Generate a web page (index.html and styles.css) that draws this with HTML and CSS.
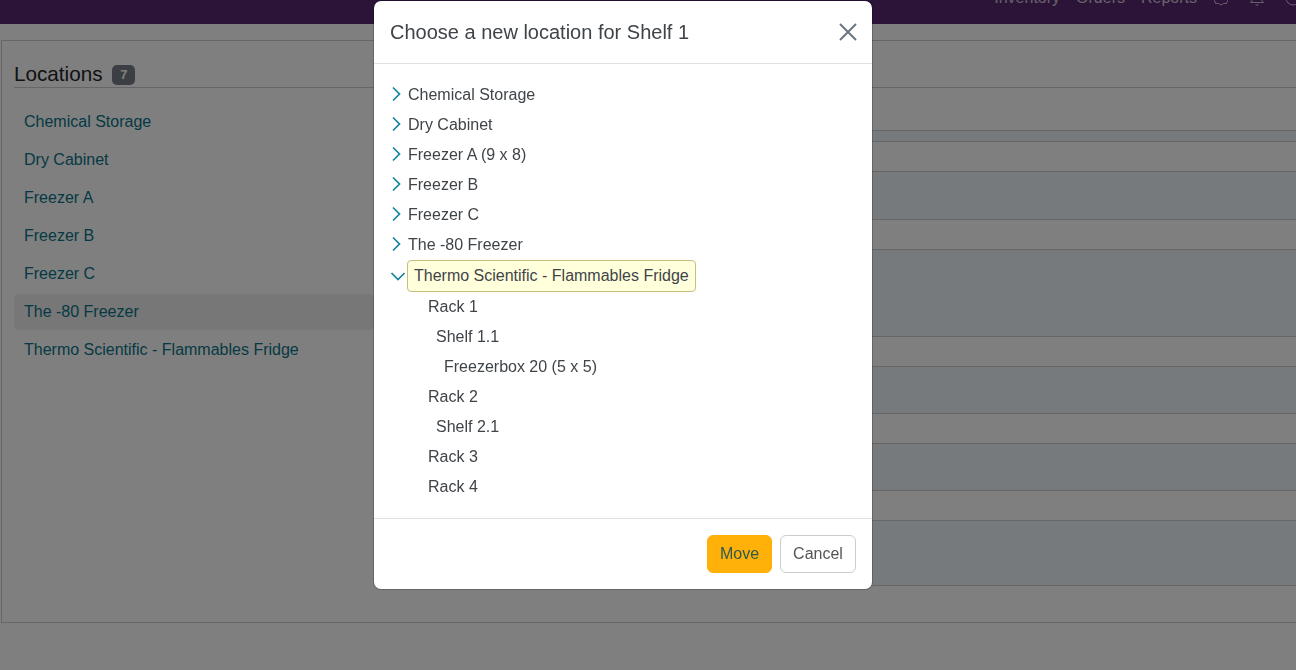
FILE: index.html
```html
<!DOCTYPE html>
<html lang="en">
<head>
<meta charset="utf-8">
<title>Locations</title>
<link rel="stylesheet" href="styles.css">
</head>
<body>
<header class="topbar">
  <nav class="topnav">
    <a>Inventory</a><a>Orders</a><a>Reports</a>
    <svg class="navicon" viewBox="0 0 16 16"><path d="M8 15 5.500 13.400 2.500 13.500 1.500 10.500 4 8l-2-3 2-3h8l2 3-2 3 2.500 2.500-1 3-3-.1z" fill="none" stroke="currentColor" stroke-width="1"/></svg>
    <svg class="navicon" viewBox="0 0 16 16"><path d="M8 1a4.500 4.500 0 0 0-4.500 4.500V10L1.500 12.500h13L12.500 10V5.500A4.500 4.500 0 0 0 8 1zM6.500 15h3" fill="none" stroke="currentColor" stroke-width="1"/></svg>
    <svg class="navicon" viewBox="0 0 16 16"><circle cx="8" cy="8" r="7" fill="none" stroke="currentColor" stroke-width="1"/></svg>
  </nav>
</header>
<main class="panel">
  <aside class="side">
    <h2 class="side-title">Locations <span class="badge">7</span></h2>
    <ul class="loc-list">
      <li>Chemical Storage</li>
      <li>Dry Cabinet</li>
      <li>Freezer A</li>
      <li>Freezer B</li>
      <li>Freezer C</li>
      <li class="active">The -80 Freezer</li>
      <li>Thermo Scientific - Flammables Fridge</li>
    </ul>
  </aside>
  <section class="content">
    <div class="row h1 blue"></div>
    <div class="row h2"></div>
    <div class="row h3 blue"></div>
    <div class="row h2"></div>
    <div class="row h4 blue"></div>
    <div class="row h2"></div>
    <div class="row h3b blue"></div>
    <div class="row h2"></div>
    <div class="row h3b blue"></div>
    <div class="row h2"></div>
    <div class="row h5 blue"></div>
  </section>
</main>
<div class="backdrop"></div>
<div class="modal">
  <div class="modal-head">
    <h3 class="modal-title">Choose a new location for Shelf 1</h3>
    <svg class="close" viewBox="0 0 18 18"><path d="M1 1l16 16M17 1L1 17" fill="none" stroke="currentColor" stroke-width="2"/></svg>
  </div>
  <div class="modal-body">
    <div class="node"><svg class="chev" viewBox="0 0 10 16"><path d="M2 1.500 8.500 8 2 14.500" /></svg>Chemical Storage</div>
    <div class="node"><svg class="chev" viewBox="0 0 10 16"><path d="M2 1.500 8.500 8 2 14.500" /></svg>Dry Cabinet</div>
    <div class="node"><svg class="chev" viewBox="0 0 10 16"><path d="M2 1.500 8.500 8 2 14.500" /></svg>Freezer A (9 x 8)</div>
    <div class="node"><svg class="chev" viewBox="0 0 10 16"><path d="M2 1.500 8.500 8 2 14.500" /></svg>Freezer B</div>
    <div class="node"><svg class="chev" viewBox="0 0 10 16"><path d="M2 1.500 8.500 8 2 14.500" /></svg>Freezer C</div>
    <div class="node"><svg class="chev" viewBox="0 0 10 16"><path d="M2 1.500 8.500 8 2 14.500" /></svg>The -80 Freezer</div>
    <div class="node open"><svg class="chev-down" viewBox="0 0 16 10"><path d="M1.500 2 8 8.500 14.500 2" /></svg><span class="picked">Thermo Scientific - Flammables Fridge</span></div>
    <div class="node lvl1">Rack 1</div>
    <div class="node lvl2">Shelf 1.1</div>
    <div class="node lvl3">Freezerbox 20 (5 x 5)</div>
    <div class="node lvl1">Rack 2</div>
    <div class="node lvl2">Shelf 2.1</div>
    <div class="node lvl1">Rack 3</div>
    <div class="node lvl1">Rack 4</div>
  </div>
  <div class="modal-foot">
    <button class="btn btn-move">Move</button>
    <button class="btn btn-cancel">Cancel</button>
  </div>
</div>
</body>
</html>
```
FILE: styles.css
```css
* { box-sizing: border-box; }
html, body { height: 100%; }
body {
  margin: 0;
  background: #fff;
  color: #212529;
  font: 16px/24px "Liberation Sans", Arial, sans-serif;
  overflow: hidden;
}
.topbar {
  height: 24px;
  background: #582670;
  overflow: hidden;
  display: flex;
  justify-content: flex-end;
  align-items: flex-end;
}
.topnav {
  display: flex;
  align-items: center;
  gap: 16px;
  color: #fff;
  opacity: .72;
  margin-bottom: 14px;
  margin-right: -5px;
  flex: none;
}
.navicon { width: 16px; height: 16px; flex: none; }
.navicon + .navicon { margin-left: 4px; }
.panel {
  margin: 16px 0 0 1px;
  height: 583px;
  border: 1px solid #ccc;
  border-right: 0;
  display: flex;
  padding: 0 0 0 12px;
}
.side { width: 360px; flex: none; }
.side-title {
  margin: 19px 0 0;
  height: 28px;
  font-size: 20.7px;
  font-weight: 400;
  line-height: 28px;
  border-bottom: 1px solid #ccc;
  color: #212529;
}
.badge {
  display: inline-block;
  vertical-align: 2px;
  margin-left: 4px;
  width: 23px;
  height: 20px;
  border-radius: 5px;
  background: #777c84;
  color: #fff;
  font-size: 13px;
  font-weight: 700;
  line-height: 20px;
  text-align: center;
}
.loc-list { list-style: none; margin: 16px 0 0; padding: 0; }
.loc-list li {
  height: 36px;
  margin-bottom: 2px;
  padding: 6px 10px;
  color: #0a7488;
  border-radius: 4px;
}
.loc-list .active { background: #eee; }
.content {
  flex: 1;
  padding-top: 46px;
  display: flex;
  flex-direction: column;
}
.content::before {
  content: "";
  height: 42px;
  border-top: 1px solid #ccc;
  flex: none;
}
.row { border-top: 1px solid #ccc; flex: none; }
.row:last-child { border-bottom: 1px solid #ccc; }
.blue { background: #eef5f9; }
.h1 { height: 11px; }
.h2 { height: 30px; }
.h3 { height: 48px; }
.h3b { height: 47px; }
.h4 { height: 87px; }
.h5 { height: 66px; }
.backdrop {
  position: fixed;
  inset: 0;
  background: rgba(0, 0, 0, .5);
}
.modal {
  position: fixed;
  left: 374px;
  top: 1px;
  width: 498px;
  height: 588px;
  background: #fff;
  border-radius: 7px;
  box-shadow: 0 0 0 1px rgba(0, 0, 0, .2);
  display: flex;
  flex-direction: column;
}
.modal-head {
  height: 63px;
  flex: none;
  border-bottom: 1px solid #dee2e6;
  display: flex;
  align-items: center;
  justify-content: space-between;
  padding: 0 16px;
}
.modal-title { margin: 0; font-size: 20px; font-weight: 400; line-height: 30px; color: #3f4449; }
.close { width: 18px; height: 18px; color: #6c757d; margin-right: -1px; }
.modal-body { flex: 1; padding: 16px 16px 0; }
.node {
  height: 30px;
  display: flex;
  align-items: center;
  color: #3f4449;
  padding-left: 18px;
  position: relative;
}
.node.open { height: 32px; }
.chev, .chev-down {
  position: absolute;
  fill: none;
  stroke: #14839d;
  stroke-width: 1.700;
}
.chev { left: 1px; top: 6px; width: 10px; height: 16px; }
.chev-down { left: 0; top: 11px; width: 16px; height: 10px; }
.picked {
  margin-left: -1px;
  height: 32px;
  padding: 0 6px;
  line-height: 29px;
  background: #ffffdc;
  border: 1px solid #c5c080;
  border-radius: 4px;
}
.lvl1 { padding-left: 38px; }
.lvl2 { padding-left: 46px; }
.lvl3 { padding-left: 54px; }
.modal-foot {
  height: 71px;
  flex: none;
  border-top: 1px solid #dee2e6;
  display: flex;
  justify-content: flex-end;
  align-items: flex-start;
  gap: 8px;
  padding: 16px 16px 0;
}
.btn {
  height: 38px;
  font: inherit;
  border-radius: 6px;
  border: 1px solid #ccc;
  padding: 0 12px;
  background: #fff;
  color: #555;
}
.btn-move { background: #ffb10a; border-color: #ffb10a; color: #2f5a4d; width: 65px; }
.btn-cancel { width: 76px; }
```
